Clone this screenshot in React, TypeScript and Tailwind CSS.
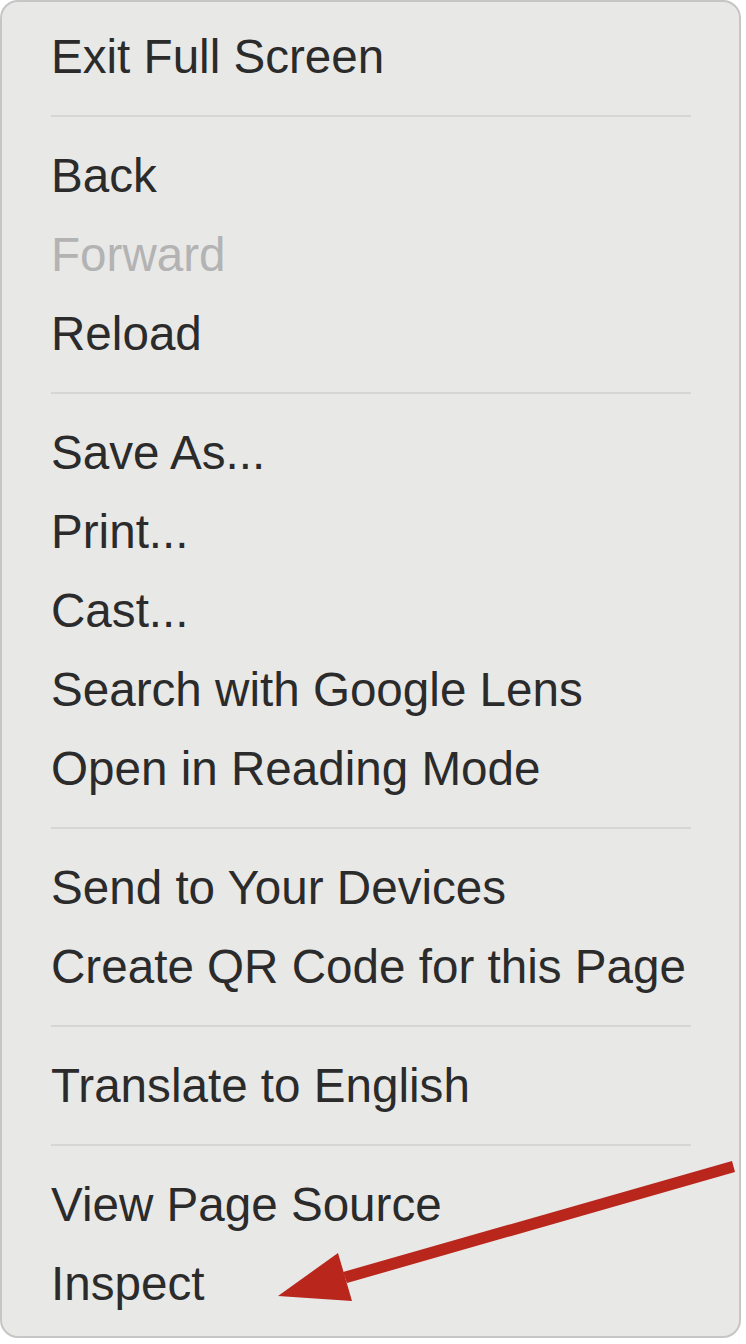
import React from "react";

type Entry = { label?: string; disabled?: boolean; sep?: boolean };

const entries: Entry[] = [
  { label: "Exit Full Screen" },
  { sep: true },
  { label: "Back" },
  { label: "Forward", disabled: true },
  { label: "Reload" },
  { sep: true },
  { label: "Save As..." },
  { label: "Print..." },
  { label: "Cast..." },
  { label: "Search with Google Lens" },
  { label: "Open in Reading Mode" },
  { sep: true },
  { label: "Send to Your Devices" },
  { label: "Create QR Code for this Page" },
  { sep: true },
  { label: "Translate to English" },
  { sep: true },
  { label: "View Page Source" },
  { label: "Inspect" },
];

export default function App() {
  return (
    <div
      className="relative w-[746px] h-[1344px] bg-white overflow-hidden"
      style={{ fontFamily: '"Liberation Sans", Arial, sans-serif' }}
    >
      <div className="w-[741px] bg-[#e8e8e7] border-2 border-[#c6c6c6] rounded-[18px] pt-[15px] pb-[13px]">
        {entries.map((e, i) =>
          e.sep ? (
            <div key={i} className="h-[40px] flex items-center pl-[49px] pr-[48px]">
              <div className="h-[2px] w-full bg-[#d6d6d5]" />
            </div>
          ) : (
            <div
              key={i}
              className={
                "h-[79px] flex items-center pl-[49px] text-[47.6px] leading-none " +
                (e.disabled ? "text-[#b3b3b3]" : "text-[#2b2b2b]")
              }
            >
              {e.label}
            </div>
          )
        )}
      </div>
      <svg
        className="absolute left-0 top-0 pointer-events-none"
        width="746"
        height="1344"
        viewBox="0 0 746 1344"
      >
        <polygon points="732,1161 735,1172 347,1283 343,1272" fill="#b9261c" />
        <polygon points="338,1253 278,1296 352,1301" fill="#b9261c" />
      </svg>
    </div>
  );
}
